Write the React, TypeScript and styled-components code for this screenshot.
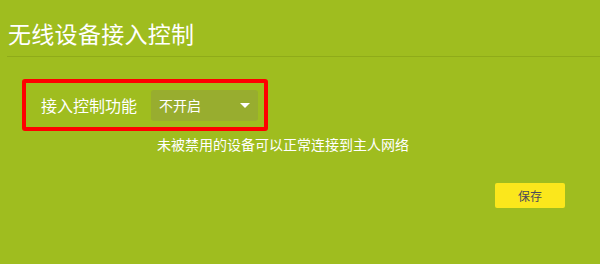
import styled, { createGlobalStyle } from "styled-components";

const GlobalStyle = createGlobalStyle`
  html, body {
    margin: 0;
    padding: 0;
    background: #9fbd1f;
  }
  body {
    font-family: "Noto Sans CJK SC", "Liberation Sans", sans-serif;
    color: #ffffff;
  }
`;

const Page = styled.div`
  width: 600px;
  height: 264px;
  background: #9fbd1f;
  overflow: hidden;
`;

const Header = styled.header`
  height: 57px;
  margin-left: 7px;
  border-bottom: 1px solid #8fab19;
  display: flex;
  align-items: flex-end;
  padding-bottom: 11px;
  box-sizing: border-box;
`;

const Title = styled.h1`
  margin: 0 0 0 1px;
  font-size: 23px;
  font-weight: 400;
  line-height: 1;
  letter-spacing: 0.3px;
  color: #ffffff;
`;

const Body = styled.div`
  padding: 22px 0 0 22px;
  display: flex;
  flex-direction: column;
`;

const Highlight = styled.div`
  width: 246px;
  height: 52px;
  box-sizing: border-box;
  border: 4px solid #ff0000;
  border-radius: 3px;
  display: flex;
  align-items: center;
  padding-left: 15px;
  gap: 14px;
`;

const Label = styled.span`
  font-size: 16px;
  line-height: 1;
  color: #ffffff;
`;

const Select = styled.div`
  width: 107px;
  height: 31px;
  border-radius: 3px;
  background: #98ad2f;
  display: flex;
  align-items: center;
  justify-content: space-between;
  padding: 0 8px 0 8px;
  box-sizing: border-box;
  font-size: 14px;
  color: #ffffff;
`;

const Caret = styled.span`
  width: 0;
  height: 0;
  border-left: 5px solid transparent;
  border-right: 5px solid transparent;
  border-top: 5px solid #ffffff;
  margin-top: 1px;
`;

const Hint = styled.p`
  margin: 5px 0 0 135px;
  font-size: 14px;
  line-height: 16px;
  color: #ffffff;
`;

const Actions = styled.div`
  display: flex;
  justify-content: flex-end;
  padding-right: 35px;
  margin-top: 31px;
`;

const SaveButton = styled.button`
  width: 70px;
  height: 25px;
  border: none;
  border-radius: 2px;
  background: #fbe71c;
  font-family: "Noto Sans CJK SC", sans-serif;
  font-size: 12px;
  color: #4a4a5a;
  padding: 0;
  cursor: pointer;
`;

export default function App() {
  return (
    <Page>
      <GlobalStyle />
      <Header>
        <Title>无线设备接入控制</Title>
      </Header>
      <Body>
        <Highlight>
          <Label>接入控制功能</Label>
          <Select>
            不开启
            <Caret />
          </Select>
        </Highlight>
        <Hint>未被禁用的设备可以正常连接到主人网络</Hint>
      </Body>
      <Actions>
        <SaveButton>保存</SaveButton>
      </Actions>
    </Page>
  );
}
